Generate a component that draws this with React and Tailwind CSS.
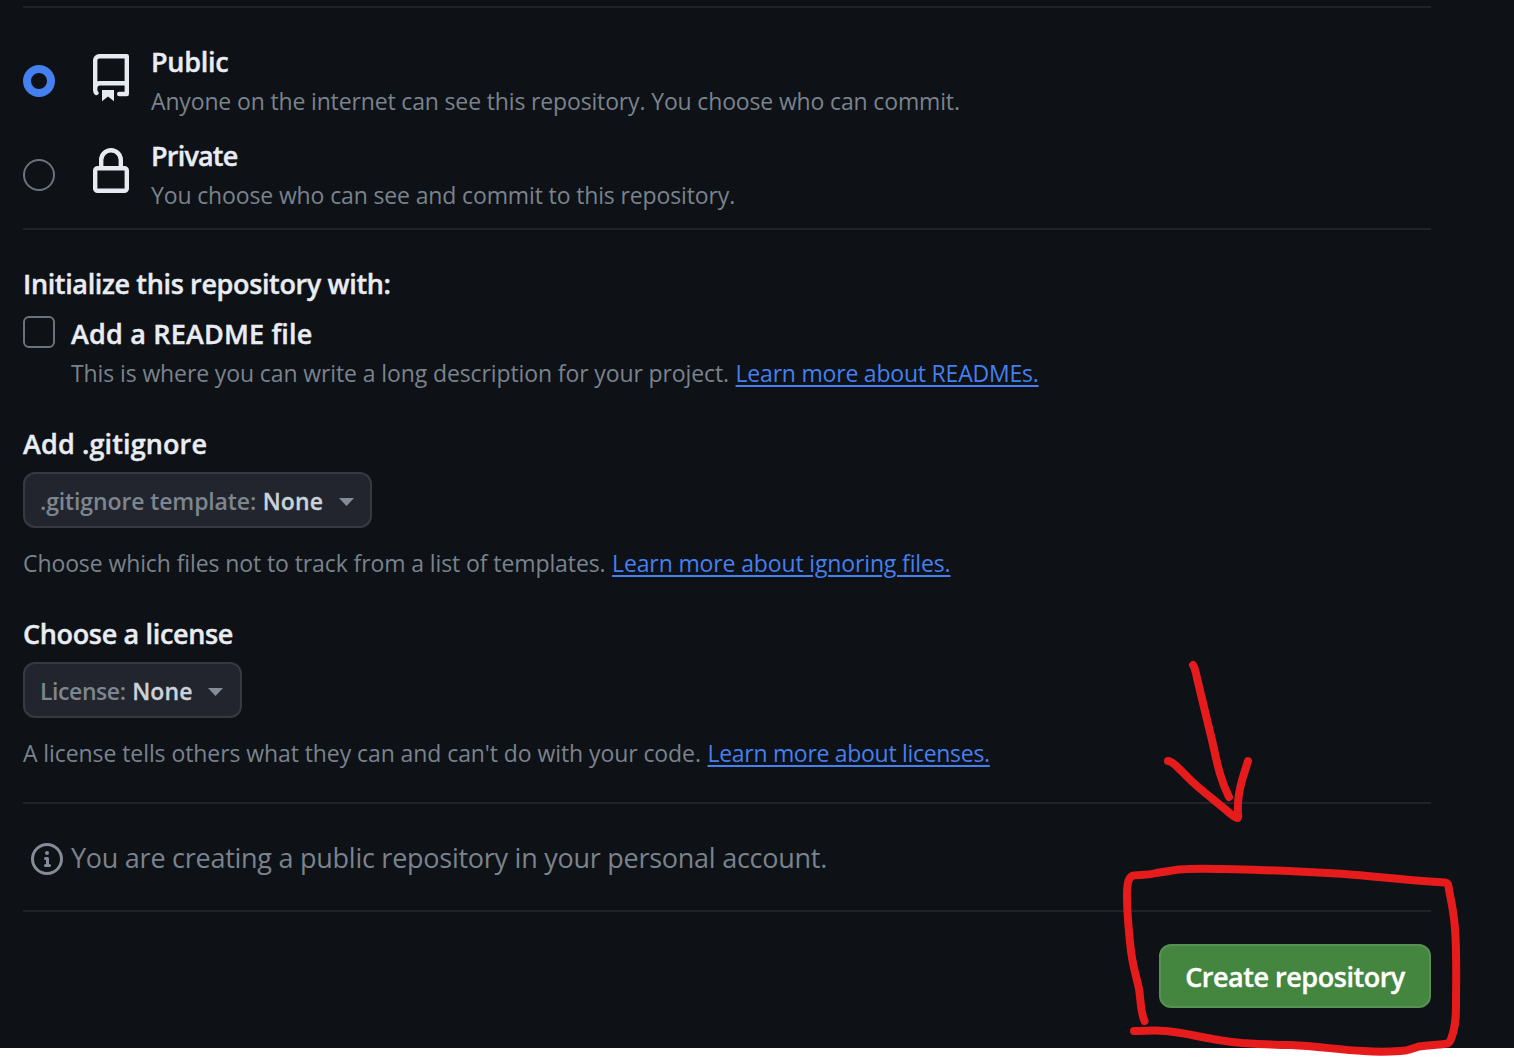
import React from 'react';

const heading = "text-[27px] leading-[40px] font-semibold [-webkit-text-stroke:0.4px] text-[#e9edf3]";
const hint = "flex gap-[6.6px] text-[23px] leading-[38px] text-[#7a838d]";
const link = "text-[#4480f0] underline decoration-2 underline-offset-[3px]";

function RepoIcon() {
  return (
    <svg viewBox="0 0 24 24" className="h-12 w-12 fill-[#e6ebf2]">
      <path d="M4.7 19.5C4.2 19.1 4.1 18.6 4.1 18V3.3A2.1 2.1 0 0 1 6.2 1.1H19.9V20H16.1M4.2 16.5A2.3 2.3 0 0 1 6.2 14.6H19.9" fill="none" stroke="#e6ebf2" strokeWidth="2.2" strokeLinecap="round" strokeLinejoin="round" />
      <path d="M7.5 18h6v5.6l-3-2.4-3 2.4Z" />
    </svg>
  );
}

function LockIcon() {
  return (
    <svg viewBox="0 0 24 24" className="h-12 w-12" fill="none" stroke="#e6ebf2" strokeWidth="2.2">
      <rect x="4.1" y="10.1" width="15.8" height="11.3" rx="1.2" />
      <path d="M7.1 10V6a4.9 4.9 0 0 1 9.8 0v4" />
    </svg>
  );
}

function InfoIcon() {
  return (
    <svg viewBox="0 0 16 16" className="mt-0.5 h-8 w-8 fill-[#868c97]">
      <path d="M0 8a8 8 0 1 1 16 0A8 8 0 0 1 0 8Zm8-6.5a6.5 6.5 0 1 0 0 13 6.5 6.5 0 0 0 0-13ZM6.5 7.75A.75.75 0 0 1 7.25 7h1a.75.75 0 0 1 .75.75v2.75h.25a.75.75 0 0 1 0 1.5h-2a.75.75 0 0 1 0-1.5h.25v-2h-.25a.75.75 0 0 1-.75-.75ZM8 6a1 1 0 1 1 0-2 1 1 0 0 1 0 2Z" />
    </svg>
  );
}

function Visibility({ checked, icon, title, titleClass, text, textClass }) {
  return (
    <label className="flex h-[78px]">
      <span className={"mt-[23px] h-8 w-8 shrink-0 rounded-full " + (checked ? "border-8 border-[#4480f0]" : "border-2 border-[#6c727d]")} />
      <span className="ml-8 w-16 shrink-0 pt-3">{icon}</span>
      <span>
        <span className={"block " + heading + " " + titleClass}>{title}</span>
        <span className={hint + " " + textClass}>{text}</span>
      </span>
    </label>
  );
}

function Dropdown({ label, labelClass, widthClass }) {
  return (
    <button className={"mt-2 flex h-14 items-center rounded-xl border-2 border-[#363a40] bg-[#22252d] pl-[15px] pt-0.5 text-[23px] font-semibold " + widthClass}>
      <span className={"text-[#7d868f] " + labelClass}>{label}</span>
      <span className="ml-[6.6px] tracking-[0.1px] text-[#cbd2da] [-webkit-text-stroke:0.3px]">None</span>
      <svg viewBox="0 0 15 8" className="ml-[15.5px] mt-0.5 h-2 w-[15px] fill-[#868c97]">
        <path d="M0 0h15L7.5 8Z" />
      </svg>
    </button>
  );
}

function Divider({ className = "" }) {
  return <div className={"h-0.5 w-full bg-[#20242a] " + className} />;
}

function Annotation() {
  return (
    <svg viewBox="0 0 414 417" className="pointer-events-none absolute left-[1100px] top-[640px] h-[417px] w-[414px]" fill="none" stroke="#e61c1c" strokeWidth="8" strokeLinecap="round" strokeLinejoin="round">
      <path d="M93 25C95 28 96 33 97 38L110 92C116 115 118 135 129 157" />
      <path d="M68 121C74 121 85 136 97 146C111 158 123 167 132 175C137 179 139 180 138 173C137 156 141 144 143 137L148 121" />
      <path d="M44.5 381C40 370 41 360 39 349C36 334 32 326 30 302C28 282 27 273 27 256C27 245 28 238 32 236C37 234 45 236 56 233C70 231 78 229 87 229C130 228 190 231 228 233C258 234 288 239 345 242.5C349 243 348 245 350 255C352 265 354 274 355 289C357 314 356 345 356 365C356 381 355 389 351 399C349 406 346 403 323 406C315 406 311 411 300 411C286 412 276 412 264 411C239 410 218 406 191 405C174 405 158 404 142 403C107 400 90 393 66 391C56 390 46 391 34 391" />
    </svg>
  );
}

export default function App() {
  return (
    <main className="relative h-[1057px] w-full overflow-hidden bg-white font-['Open_Sans','Noto_Sans',sans-serif] whitespace-nowrap">
      <div className="h-[1048px] bg-[#0e1116] pl-[23px] pr-[83px] pt-1.5">
        <Divider />
        <section className="flex flex-col gap-4 pt-[34px]">
          <Visibility checked icon={<RepoIcon />} title="Public" titleClass="tracking-[-0.25px]" text="Anyone on the internet can see this repository. You choose who can commit." textClass="tracking-[-0.15px]" />
          <Visibility icon={<LockIcon />} title="Private" titleClass="tracking-[-0.8px]" text="You choose who can see and commit to this repository." textClass="tracking-[-0.135px]" />
        </section>
        <Divider className="mt-3.5" />

        <section className="pt-[34px]">
          <h2 className={heading + " tracking-[-0.36px]"}>Initialize this repository with:</h2>
          <label className="mt-2.5 flex gap-4">
            <span className="mt-0.5 h-8 w-8 rounded-md border-2 border-[#6c727d]" />
            <span>
              <span className={"block tracking-[0.18px] " + heading}>Add a README file</span>
              <span className={hint}>
                <span className="tracking-[-0.11px]">This is where you can write a long description for your project.</span>
                <a className={link + " tracking-[-0.21px]"}>Learn more about READMEs.</a>
              </span>
            </span>
          </label>
        </section>

        <section className="pt-8">
          <h2 className={heading + " tracking-[0.12px]"}>Add .gitignore</h2>
          <Dropdown label=".gitignore template:" labelClass="tracking-[-0.12px]" widthClass="w-[349px]" />
          <p className={"mt-4 " + hint}>
            <span className="tracking-[-0.1px]">Choose which files not to track from a list of templates.</span>
            <a className={link + " tracking-[-0.14px]"}>Learn more about ignoring files.</a>
          </p>
        </section>

        <section className="pt-8">
          <h2 className={heading + " tracking-[-0.34px]"}>Choose a license</h2>
          <Dropdown label="License:" labelClass="tracking-[-0.42px]" widthClass="w-[219px]" />
          <p className={"mt-4 " + hint}>
            <span className="tracking-[-0.08px]">A license tells others what they can and can't do with your code.</span>
            <a className={link + " tracking-[-0.3px]"}>Learn more about licenses.</a>
          </p>
        </section>

        <Divider className="mt-[30px]" />
        <div className="flex items-center gap-2 pb-8 pl-2 pt-[34px] text-[27px] leading-[40px] tracking-[-0.26px] text-[#7a838d]">
          <InfoIcon />
          <span>You are creating a public repository in your personal account.</span>
        </div>
        <Divider />
        <div className="flex justify-end pt-8">
          <button className="h-16 w-[272px] rounded-xl border-2 border-[#559152] bg-[#448540] pt-0.5 text-[27px] font-semibold tracking-[-0.47px] text-white [-webkit-text-stroke:0.4px]">Create repository</button>
        </div>
      </div>
      <Annotation />
    </main>
  );
}
